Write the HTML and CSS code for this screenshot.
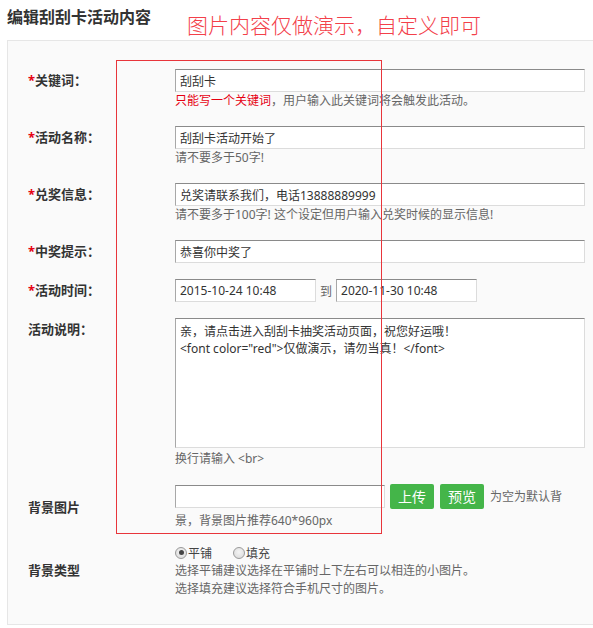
FILE: index.html
```html
<!DOCTYPE html>
<html lang="zh-CN">
<head>
<meta charset="utf-8">
<title>编辑刮刮卡活动内容</title>
<link rel="stylesheet" href="styles.css">
</head>
<body>
<div class="page">
  <h1 class="title">编辑刮刮卡活动内容</h1>
  <div class="note">图片内容仅做演示，自定义即可</div>
  <div class="frame"></div>
  <form class="panel">
    <div class="row">
      <label class="label"><span class="req">*</span>关键词<span class="colon">：</span></label>
      <div class="field">
        <input class="text" type="text" value="刮刮卡">
        <p class="hint"><span class="warn">只能写一个关键词</span>，用户输入此关键词将会触发此活动。</p>
      </div>
    </div>
    <div class="row">
      <label class="label"><span class="req">*</span>活动名称<span class="colon">：</span></label>
      <div class="field">
        <input class="text" type="text" value="刮刮卡活动开始了">
        <p class="hint">请不要多于50字!</p>
      </div>
    </div>
    <div class="row">
      <label class="label"><span class="req">*</span>兑奖信息<span class="colon">：</span></label>
      <div class="field">
        <input class="text" type="text" value="兑奖请联系我们，电话13888889999">
        <p class="hint">请不要多于100字! 这个设定但用户输入兑奖时候的显示信息!</p>
      </div>
    </div>
    <div class="row">
      <label class="label"><span class="req">*</span>中奖提示<span class="colon">：</span></label>
      <div class="field">
        <input class="text" type="text" value="恭喜你中奖了">
      </div>
    </div>
    <div class="row">
      <label class="label"><span class="req">*</span>活动时间<span class="colon">：</span></label>
      <div class="field dates">
        <input class="text date" type="text" value="2015-10-24 10:48">
        <span class="to">到</span>
        <input class="text date" type="text" value="2020-11-30 10:48">
      </div>
    </div>
    <div class="row">
      <label class="label">活动说明<span class="colon">：</span></label>
      <div class="field">
        <textarea class="area">亲，请点击进入刮刮卡抽奖活动页面，祝您好运哦！
&lt;font color="red"&gt;仅做演示，请勿当真！&lt;/font&gt;</textarea>
        <p class="hint hint-low">换行请输入 &lt;br&gt;</p>
      </div>
    </div>
    <div class="row row-mid row-upload">
      <label class="label">背景图片</label>
      <div class="field upload"><input class="text file" type="text"><button class="btn" type="button">上传</button><button class="btn btn-2" type="button">预览</button><span class="upload-tip">为空为默认背景，背景图片推荐640*960px</span></div>
    </div>
    <div class="row row-mid row-last">
      <label class="label">背景类型</label>
      <div class="field">
        <div class="radios">
          <span class="radio-item"><span class="radio checked"></span>平铺</span>
          <span class="radio-item"><span class="radio"></span>填充</span>
        </div>
        <p class="hint">选择平铺建议选择在平铺时上下左右可以相连的小图片。</p>
        <p class="hint">选择填充建议选择符合手机尺寸的图片。</p>
      </div>
    </div>
  </form>
</div>
</body>
</html>
```

FILE: styles.css
```css
* { box-sizing: border-box; }

html, body {
  margin: 0;
  padding: 0;
  background: #ffffff;
  overflow: hidden;
}

body {
  font-family: "Noto Sans", "Noto Sans CJK SC", sans-serif;
  color: #333;
  font-size: 12px;
}

.page {
  position: relative;
  width: 593px;
  height: 628px;
  padding-top: 7px;
}

.title {
  margin: 0 0 13px 7px;
  font-size: 16px;
  line-height: 20px;
  font-weight: bold;
  color: #333;
}

.note {
  position: absolute;
  left: 187px;
  top: 13px;
  font-size: 21px;
  line-height: 24px;
  color: #f3404a;
  font-weight: 300;
  letter-spacing: 0;
}

.frame {
  position: absolute;
  left: 116px;
  top: 60px;
  width: 266px;
  height: 474px;
  border: 1px solid #e8353b;
  z-index: 5;
  pointer-events: none;
}

.panel {
  margin: 0 0 0 7px;
  border: 1px solid #e6e6e6;
  border-right: none;
  background: #fafafa;
  padding: 28px 0 26px 20px;
}

.row {
  display: flex;
  align-items: flex-start;
  margin-bottom: 16px;
}

.row-mid { align-items: center; }
.row-upload { margin-bottom: 12px; }
.row-last { margin-bottom: 0; }

.label {
  flex: 0 0 147px;
  font-size: 13px;
  line-height: 23px;
  font-weight: bold;
  color: #333;
}

.colon {
  display: inline-block;
  width: 13px;
  text-align: center;
}

.req { color: #e60012; font-weight: bold; }

.field {
  width: 410px;
}

.text {
  display: block;
  width: 410px;
  height: 23px;
  margin: 0;
  padding: 0 4px;
  font-family: "Noto Sans", "Noto Sans CJK SC", sans-serif;
  font-size: 12px;
  color: #333;
  background: #fff;
  border: 1px solid #dcdcdc;
  border-top-color: #8a8a8a;
  border-left-color: #a8a8a8;
  border-radius: 0;
  outline: none;
}

.hint {
  margin: 0;
  font-size: 12px;
  line-height: 18px;
  color: #666;
}

.hint-low { margin-top: 2px; }

.warn { color: #e60012; }

.dates {
  display: flex;
  align-items: center;
}

.date { width: 141px; }

.to {
  margin: 0 4px 0 4px;
  font-size: 12px;
  color: #666;
}

.area {
  display: block;
  width: 410px;
  height: 130px;
  margin: 0;
  padding: 4px 4px;
  font-family: "Noto Sans", "Noto Sans CJK SC", sans-serif;
  font-size: 12px;
  line-height: 17px;
  color: #333;
  background: #fff;
  border: 1px solid #dcdcdc;
  border-top-color: #8a8a8a;
  border-left-color: #a8a8a8;
  resize: none;
  outline: none;
}

.upload {
  width: 405px;
  line-height: 22px;
  font-size: 12px;
  color: #666;
}

.file {
  display: inline-block;
  width: 210px;
  vertical-align: middle;
}

.btn {
  display: inline-block;
  vertical-align: middle;
  height: 25px;
  margin: 0 0 0 5px;
  padding: 0 8px;
  border: none;
  border-radius: 2px;
  background: #44b549;
  color: #fff;
  font-family: "Noto Sans", "Noto Sans CJK SC", sans-serif;
  font-size: 14px;
  line-height: 25px;
}

.btn-2 { margin-left: 6px; }

.upload-tip {
  margin-left: 6px;
  vertical-align: middle;
}

.radios {
  display: flex;
  align-items: center;
  height: 18px;
  font-size: 12px;
  color: #444;
}

.radio-item {
  display: inline-flex;
  align-items: center;
  margin-right: 21px;
}

.radio {
  display: inline-block;
  width: 12px;
  height: 12px;
  margin-right: 1px;
  border: 1px solid #9a9a9a;
  border-radius: 50%;
  background: radial-gradient(circle at 50% 40%, #f4f4f4 0%, #d8d8d8 100%);
  position: relative;
}

.radio.checked::after {
  content: "";
  position: absolute;
  left: 2.5px;
  top: 2.5px;
  width: 5px;
  height: 5px;
  border-radius: 50%;
  background: #444;
}
```
